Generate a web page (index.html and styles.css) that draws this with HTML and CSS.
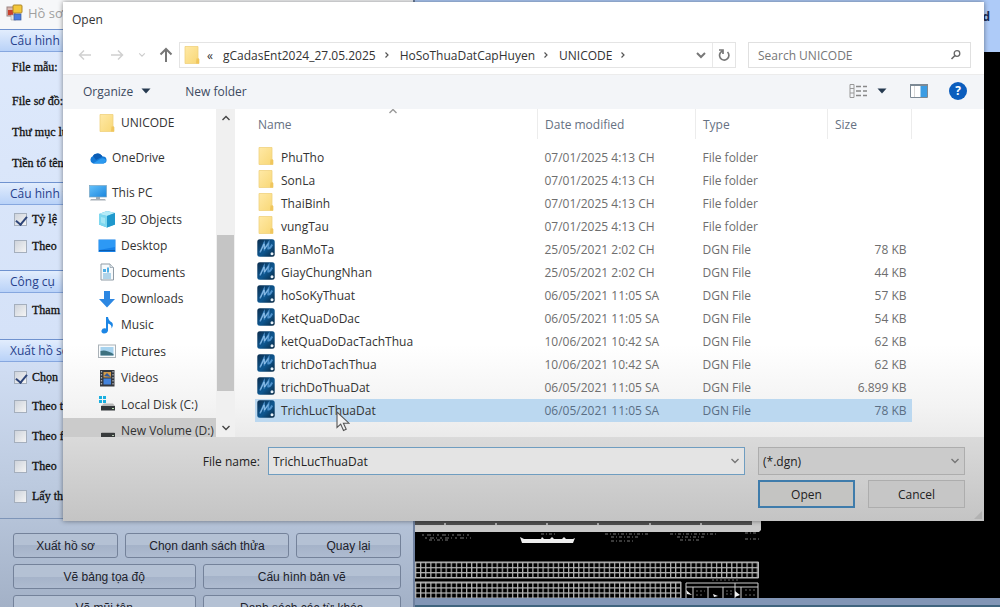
FILE: index.html
```html
<!DOCTYPE html>
<html lang="vi">
<head>
<meta charset="utf-8">
<title>Open</title>
<link rel="stylesheet" href="styles.css">
</head>
<body>
<svg class="defs" width="0" height="0" aria-hidden="true">
  <defs>
    <linearGradient id="gFolder" x1="0" y1="0" x2="1" y2="1"><stop offset="0" stop-color="#ffe9a6"/><stop offset="1" stop-color="#f8d775"/></linearGradient>
    <linearGradient id="gScreen" x1="0" y1="0" x2="1" y2="1"><stop offset="0" stop-color="#63c1fb"/><stop offset="1" stop-color="#1b86dd"/></linearGradient>
    <linearGradient id="gDgn" x1="0" y1="0" x2="1" y2="1"><stop offset="0" stop-color="#0b2c4c"/><stop offset=".55" stop-color="#0e5790"/><stop offset="1" stop-color="#08263f"/></linearGradient>
    <symbol id="folder" viewBox="0 0 18 18"><path d="M2 .5h13v12.500h1v4.500H2z" fill="url(#gFolder)" stroke="#f0d27e" stroke-width=".8"/><path d="M13.500 12.500h2.500v5h-3z" fill="#f0c65d"/></symbol>
    <symbol id="dgn" viewBox="0 0 18 18"><rect x=".3" y=".3" width="17.400" height="17.400" rx="2.500" fill="url(#gDgn)"/><path d="M3 13.500 7 4.500 7.500 10 11.500 4 11.200 9.500q2 .3 4-4" fill="none" stroke="#4f92cc" stroke-width="1.800"/><path d="M3.500 12.500 7 5 7.500 10 11.500 4.500" fill="none" stroke="#a5cdee" stroke-width=".7"/><circle cx="15" cy="14.800" r="1.500" fill="#e8f2fa"/></symbol>
    <symbol id="cloud" viewBox="0 0 18 18"><path d="M4 14.500a4 4 0 0 1 0-7.500 5.500 5.500 0 0 1 9.500.5 3.500 3.500 0 0 1 1 7z" fill="#1479d6"/><path d="M4 7a5.500 5.500 0 0 1 9.500.5L7 11z" fill="#0b5cb4"/><path d="M4 14.500 12 9.500q3.500-1 5 1.500a3.500 3.500 0 0 1-2.500 3.500z" fill="#2b9af0"/></symbol>
    <symbol id="pc" viewBox="0 0 18 18"><rect x=".5" y="1.500" width="17" height="11.500" fill="url(#gScreen)" stroke="#7ba5c2" stroke-width=".7"/><path d="M7 13h4v2H7z" fill="#9dacb7"/><path d="M2 15h14l1 1.500H1z" fill="#a7b0b7"/></symbol>
    <symbol id="cube" viewBox="0 0 18 18"><path d="M1 4 9 1l8 2v11.500L9 17.500l-8-3z" fill="#3aaedc"/><path d="m1 4 8 2v11.500l-8-3z" fill="#7ed8ef"/><path d="m1 4 8-3 8 2-8 3z" fill="#b5ecf8"/><path d="m3 7 4 1v6l-4-1.500z" fill="#a3e6f5"/><path d="m9 6 8-3v11.500l-8 3z" fill="#1f98cc"/></symbol>
    <symbol id="desk" viewBox="0 0 18 18"><rect x=".5" y="2.500" width="17" height="12.500" fill="#1681e8"/><path d="M1 3h16v7L1 13z" fill="#2d99f5"/><path d="M1 13.500h16" stroke="#0d5cad" stroke-width="1"/></symbol>
    <symbol id="doc" viewBox="0 0 18 18"><path d="M3 1h9l3.500 3.500V17H3z" fill="#f7fafc" stroke="#8f9ba5"/><path d="M12 1v3.500h3.500" fill="#dbe3e9" stroke="#8f9ba5" stroke-width=".7"/><path d="M5 6h3v3H5zM9 4.500h2v5H9z" fill="#4eaee5"/><path d="M5 11h8M5 13h8M5 15h8" stroke="#69add6"/></symbol>
    <symbol id="down" viewBox="0 0 18 18"><path d="M6 1h6v8h5l-8 8.500L1 9h5z" fill="#2c87e2"/></symbol>
    <symbol id="note" viewBox="0 0 18 18"><path d="M8 1h2q.5 3.500 4 5.500 2 2.500-.5 6 .5-4-3.500-5v7q-.5 3-4 3-3-.3-2.500-3 1-3 4.500-2z" fill="#1c86e5"/></symbol>
    <symbol id="pic" viewBox="0 0 18 18"><rect x=".5" y="3" width="17" height="12.500" fill="#fafcfd" stroke="#aab2b8"/><path d="M2.500 5h13v8.500h-13z" fill="#a7d3ef"/><path d="M2.500 9q5-2 13 3v1.500h-13z" fill="#3d7180"/></symbol>
    <symbol id="film" viewBox="0 0 18 18"><rect x="2" y="1" width="14.500" height="16.500" fill="#34383f"/><path d="M3.500 2v15M15 2v15" stroke="#a9adb2" stroke-width="1.300" stroke-dasharray="1.500 1.500"/><path d="M5.500 3h7.500v5.500H5.500z" fill="#d39a49"/><path d="M5.500 9.500h7.500v6H5.500z" fill="#4383dc"/><path d="m6 7 3-3 4 4z" fill="#315b9f"/></symbol>
    <symbol id="windisk" viewBox="0 0 18 18"><path d="M1 1h3v3H1zM5 1h3v3H5zM1 5h3v3H1zM5 5h3v3H5z" fill="#19afe0"/><path d="m4 10 2-1.500h9L17 11H3z" fill="#b8b8b8"/><path d="M3 11h14v4.500H3z" fill="#33373a"/><path d="M14 13.500h2" stroke="#b7dfae"/></symbol>
    <symbol id="disk" viewBox="0 0 18 18"><path d="m3 11 1-1h12l1 1z" fill="#aaa"/><path d="M3 11h14v4H3z" fill="#383b3c"/><path d="M14 13.500h2" stroke="#b5c8b0"/></symbol>
    <symbol id="chev" viewBox="0 0 10 10"><path d="m1.500 3 3.500 3.500L8.500 3" fill="none" stroke="currentColor" stroke-width="1.400"/></symbol>
    <symbol id="chevr" viewBox="0 0 10 10"><path d="m3.500 2.500 2.500 2.500-2.500 2.500" fill="none" stroke="currentColor" stroke-width="1.200"/></symbol>
    <symbol id="tri" viewBox="0 0 10 10"><path d="M.5 2.500h9L5 7.500z" fill="currentColor"/></symbol>
  </defs>
</svg>

<main class="desktop">
  <section class="app">
    <header class="app-title">
      <svg width="18" height="18" viewBox="0 0 18 18"><rect x="1" y="3" width="8" height="9" fill="#d9b6b0" stroke="#9b8584"/><path d="M2 6h5v5H2z" fill="#c9412e"/><rect x="7" y="1" width="9" height="8" rx="1" fill="#f3c73b" stroke="#ae882b"/><path d="M5 11h5v5H5z" fill="#e6e5e3" stroke="#a5a5a5" stroke-width=".6"/><rect x="8" y="10" width="7" height="6" fill="#497de0" stroke="#3a599c" stroke-width=".7"/></svg>
      <span>Hồ sơ</span>
    </header>
    <h2 class="band">Cấu hình mẫu</h2>
    <div class="group files">
      <div class="field first">File mẫu:</div>
      <div class="field">File sơ đồ:</div>
      <div class="field">Thư mục lưu</div>
      <div class="field">Tiền tố tên</div>
    </div>
    <h2 class="band">Cấu hình tỷ lệ</h2>
    <div class="group scale">
      <label class="check"><input type="checkbox" checked>Tỷ lệ</label>
      <label class="check"><input type="checkbox">Theo</label>
    </div>
    <h2 class="band">Công cụ</h2>
    <div class="group tools">
      <label class="check"><input type="checkbox">Tham</label>
    </div>
    <h2 class="band">Xuất hồ sơ</h2>
    <div class="group export">
      <label class="check"><input type="checkbox" checked>Chọn</label>
      <label class="check tall"><input type="checkbox">Theo thửa</label>
      <label class="check tall"><input type="checkbox">Theo file</label>
      <label class="check tall"><input type="checkbox">Theo</label>
      <label class="check tall"><input type="checkbox">Lấy thửa</label>
    </div>
    <footer class="actions">
      <div class="action-row three"><button>Xuất hồ sơ</button><button>Chọn danh sách thửa</button><button>Quay lại</button></div>
      <div class="action-row two"><button>Vẽ bảng tọa độ</button><button>Cấu hình bản vẽ</button></div>
      <div class="action-row two"><button>Vẽ mũi tên</button><button>Danh sách các từ khóa</button></div>
    </footer>
  </section>

  <section class="cad">
    <div class="cad-head">d</div>
    <div class="cad-view">
      <svg width="346" height="77" viewBox="0 0 346 77">
        <defs>
          <pattern id="cells" width="5.100" height="5.100" patternUnits="userSpaceOnUse"><path d="M0 .6h5.100M.6 0v5.100" stroke="#b4b4b4" stroke-width="1.200"/></pattern>
        </defs>
        <path d="M0 0h346v9l-2 2H0z" fill="#c9c9c9"/><path d="M0 0h337v4H0z" fill="#505050"/>
        <path d="M30 2v2M81 2v2M132 2v2M183 2v2M235 2v2M286 2v2M338 1v3" stroke="#ccc" stroke-width="1.500"/>
        <g stroke="#777" fill="none" stroke-width="1"><path d="M7 14h50M10 17h46" stroke-dasharray="2 3 4 2 1 3"/><path d="M14 19h20M126 13h16M190 13h45M196 16h28M255 13h48M262 16h28M265 19h20M330 12h12M330 18h14M196 20h22" stroke-dasharray="3 2 1 2"/></g>
        <path d="m105 16 4 2h17l1-2 2 2h6l2-2 2 2h8l2-2 2 2h7l2-1-2 5h-51z" fill="#eee"/>
        <path d="M0 41h343v16H0z" fill="url(#cells)"/><path d="M0 41h343.500v16H0" fill="none" stroke="#b4b4b4"/>
        <path d="M0 61h266v16H0z" fill="url(#cells)"/><path d="M0 61h266v16" fill="none" stroke="#b4b4b4"/>
        <path d="M271 77V62h72v15M271 66h72M278 66v11M293 66v11M308 66v11M320 62v15M326 66v11" fill="none" stroke="#ccc"/>
        <path d="m271 69 6 5-5-1zM298 73l5 2-4 1zM320 70l5 4-5 2z" fill="#eee"/>
        <path d="M297 59h27M281 70h9M281 74h8M311 70h7M311 73h6M330 69h10M330 74h10" stroke="#666" stroke-dasharray="2 2"/>
      </svg>
    </div>
    <div class="cad-status"></div>
  </section>
</main>

<div class="dialog" role="dialog" aria-labelledby="dlg-title">
  <header class="dlg-title" id="dlg-title">Open</header>
  <div class="address">
    <button class="nav back" aria-label="Back"><svg width="14" height="14" viewBox="0 0 14 14"><path d="M13 7H1.500M6 2.500 1.500 7 6 11.500" fill="none" stroke="#d0d0d0" stroke-width="1.500"/></svg></button>
    <button class="nav forward" aria-label="Forward"><svg width="14" height="14" viewBox="0 0 14 14"><path d="M1 7h11.500M8 2.500 12.500 7 8 11.500" fill="none" stroke="#d0d0d0" stroke-width="1.500"/></svg></button>
    <button class="nav recent" aria-label="Recent locations"><svg width="8" height="8"><use href="#chev"/></svg></button>
    <button class="nav up" aria-label="Up"><svg width="14" height="16" viewBox="0 0 14 16"><path d="M7 15V2M1.500 7.500 7 2l5.500 5.500" fill="none" stroke="#777" stroke-width="2"/></svg></button>
    <div class="path">
      <svg width="18" height="18"><use href="#folder"/></svg>
      <span class="laquo">«</span>
      <span>gCadasEnt2024_27.05.2025</span>
      <svg class="sep" width="10" height="10"><use href="#chevr"/></svg>
      <span>HoSoThuaDatCapHuyen</span>
      <svg class="sep" width="10" height="10"><use href="#chevr"/></svg>
      <span>UNICODE</span>
      <svg class="sep" width="10" height="10"><use href="#chevr"/></svg>
      <button class="plain drop" aria-label="Previous locations"><svg width="12" height="12" viewBox="0 0 12 12"><path d="m2 4 4 4 4-4" fill="none" stroke="#777" stroke-width="2"/></svg></button>
      <button class="plain refresh" aria-label="Refresh"><svg width="14" height="14" viewBox="0 0 14 14"><path d="M10.500 4A4.700 4.700 0 1 1 5 3.200M2 2h4v4" fill="none" stroke="#777" stroke-width="1.700"/></svg></button>
    </div>
    <div class="search">
      <input type="text" placeholder="Search UNICODE" aria-label="Search UNICODE">
      <svg width="12" height="12" viewBox="0 0 12 12"><circle cx="7" cy="4.500" r="2.800" fill="none" stroke="#666" stroke-width="1.300"/><path d="M5 6.500 1.500 10" stroke="#666" stroke-width="1.600"/></svg>
    </div>
  </div>
  <div class="toolbar">
    <button class="plain">Organize <svg width="10" height="10"><use href="#tri"/></svg></button>
    <button class="plain newfolder">New folder</button>
    <button class="plain views" aria-label="Change your view"><svg width="19" height="14" viewBox="0 0 19 14"><path d="M1 .5h4v13H1zM1 4.500h4M1 9h4" fill="none" stroke="#999"/><path d="M7 2.500h5M7 7h5M7 11.500h5M14 2.500h4M14 7h4M14 11.500h4" stroke="#888" stroke-width="1.300"/></svg></button>
    <button class="plain viewdrop" aria-label="More options"><svg width="10" height="10"><use href="#tri"/></svg></button>
    <button class="plain preview" aria-label="Preview pane"><svg width="18" height="14" viewBox="0 0 18 14"><path d="M.5.500h17v13H.5z" fill="#fff" stroke="#7c8994"/><path d="M0 1h18" stroke="#7c8994" stroke-width="2"/><path d="M4.500 2v11" stroke="#d6d6d6"/><path d="M10.500 2H17v11h-6.500z" fill="#3b9ce3"/></svg></button>
    <button class="plain" aria-label="Help"><span class="help">?</span></button>
  </div>
  <div class="body">
    <nav class="tree">
      <a class="leaf unicode" href="#"><svg width="18" height="18"><use href="#folder"/></svg>UNICODE</a>
      <a class="root" href="#"><svg width="18" height="18"><use href="#cloud"/></svg>OneDrive</a>
      <a class="root" href="#"><svg width="18" height="18"><use href="#pc"/></svg>This PC</a>
      <div class="leaves">
        <a class="leaf" href="#"><svg width="18" height="18"><use href="#cube"/></svg>3D Objects</a>
        <a class="leaf" href="#"><svg width="18" height="18"><use href="#desk"/></svg>Desktop</a>
        <a class="leaf" href="#"><svg width="18" height="18"><use href="#doc"/></svg>Documents</a>
        <a class="leaf" href="#"><svg width="18" height="18"><use href="#down"/></svg>Downloads</a>
        <a class="leaf" href="#"><svg width="18" height="18"><use href="#note"/></svg>Music</a>
        <a class="leaf" href="#"><svg width="18" height="18"><use href="#pic"/></svg>Pictures</a>
        <a class="leaf" href="#"><svg width="18" height="18"><use href="#film"/></svg>Videos</a>
        <a class="leaf" href="#"><svg width="18" height="18"><use href="#windisk"/></svg>Local Disk (C:)</a>
        <a class="leaf selected" href="#"><svg width="18" height="18"><use href="#disk"/></svg>New Volume (D:)</a>
      </div>
    </nav>
    <div class="scroll">
      <svg class="flip" width="10" height="10"><use href="#chev"/></svg>
      <div class="thumb"></div>
      <svg width="10" height="10"><use href="#chev"/></svg>
    </div>
    <div class="list">
      <table>
        <colgroup><col><col class="c-date"><col class="c-type"><col class="c-size"></colgroup>
        <thead><tr><th><span class="sort"><svg class="flip" width="10" height="10"><use href="#chev"/></svg></span>Name</th><th>Date modified</th><th>Type</th><th>Size</th></tr></thead>
        <tbody>
          <tr><td><span class="name"><svg width="18" height="18"><use href="#folder"/></svg>PhuTho</span></td><td>07/01/2025 4:13 CH</td><td>File folder</td><td></td></tr>
          <tr><td><span class="name"><svg width="18" height="18"><use href="#folder"/></svg>SonLa</span></td><td>07/01/2025 4:13 CH</td><td>File folder</td><td></td></tr>
          <tr><td><span class="name"><svg width="18" height="18"><use href="#folder"/></svg>ThaiBinh</span></td><td>07/01/2025 4:13 CH</td><td>File folder</td><td></td></tr>
          <tr><td><span class="name"><svg width="18" height="18"><use href="#folder"/></svg>vungTau</span></td><td>07/01/2025 4:13 CH</td><td>File folder</td><td></td></tr>
          <tr><td><span class="name"><svg width="18" height="18"><use href="#dgn"/></svg>BanMoTa</span></td><td>25/05/2021 2:02 CH</td><td>DGN File</td><td>78 KB</td></tr>
          <tr><td><span class="name"><svg width="18" height="18"><use href="#dgn"/></svg>GiayChungNhan</span></td><td>25/05/2021 2:02 CH</td><td>DGN File</td><td>44 KB</td></tr>
          <tr><td><span class="name"><svg width="18" height="18"><use href="#dgn"/></svg>hoSoKyThuat</span></td><td>06/05/2021 11:05 SA</td><td>DGN File</td><td>57 KB</td></tr>
          <tr><td><span class="name"><svg width="18" height="18"><use href="#dgn"/></svg>KetQuaDoDac</span></td><td>06/05/2021 11:05 SA</td><td>DGN File</td><td>54 KB</td></tr>
          <tr><td><span class="name"><svg width="18" height="18"><use href="#dgn"/></svg>ketQuaDoDacTachThua</span></td><td>10/06/2021 10:42 SA</td><td>DGN File</td><td>62 KB</td></tr>
          <tr><td><span class="name"><svg width="18" height="18"><use href="#dgn"/></svg>trichDoTachThua</span></td><td>10/06/2021 10:42 SA</td><td>DGN File</td><td>62 KB</td></tr>
          <tr><td><span class="name"><svg width="18" height="18"><use href="#dgn"/></svg>trichDoThuaDat</span></td><td>06/05/2021 11:05 SA</td><td>DGN File</td><td>6.899 KB</td></tr>
          <tr class="picked"><td><span class="name"><svg width="18" height="18"><use href="#dgn"/></svg>TrichLucThuaDat<svg class="cursor" width="14" height="21" viewBox="0 0 14 21"><path d="M1 1v15.500l3.700-3.400 2.800 6.400 2.700-1.200-2.800-6.100H13z" fill="#f2f2f2" stroke="#555" stroke-width="1.100"/></svg></span></td><td>06/05/2021 11:05 SA</td><td>DGN File</td><td>78 KB</td></tr>
        </tbody>
      </table>
    </div>
  </div>
  <footer class="dlg-foot">
    <label class="fn-label" for="fn">File name:</label>
    <div class="combo"><input id="fn" type="text" value="TrichLucThuaDat"><svg width="10" height="10"><use href="#chev"/></svg></div>
    <div class="filter"><select aria-label="File type"><option>(*.dgn)</option></select><svg width="10" height="10"><use href="#chev"/></svg></div>
    <div class="buttons"><button class="btn primary">Open</button><button class="btn">Cancel</button></div>
    <svg class="grip" width="8" height="8" viewBox="0 0 8 8"><path d="M8 0v8H0z" fill="#b2b2b2"/></svg>
  </footer>
</div>
</body>
</html>
```
FILE: styles.css
```css
* { box-sizing: border-box; }
body { margin: 0; height: 100vh; overflow: hidden; position: relative; background: #000; font-family: "Open Sans", "Noto Sans", sans-serif; font-size: 12px; color: #333; }
button, input, select { font: inherit; color: inherit; margin: 0; }
a { color: inherit; text-decoration: none; }
svg { flex: none; display: block; }
.defs { position: absolute; }

/* application window behind the dialog */
.desktop { display: flex; height: 100vh; overflow: hidden; }
.app { flex: 0 0 415px; height: 100%; overflow: hidden; background: linear-gradient(#dfeafc, #d5e2f8 55%, #bccadf 80%, #a3b1c7); border-right: 2px solid #6f819f; }
.app-title { display: flex; align-items: center; gap: 4px; height: 29px; padding: 0 6px 4px; background: #f6f7f9; color: #a0a0a0; font-size: 13px; }
.band { height: 23px; margin: 0; padding-left: 10px; border-top: 1px solid #6f92cf; border-bottom: 1px solid #86a7df; background: linear-gradient(#e2edfd, #b9d2f8); color: #27418c; font: 12px/22px "Open Sans", sans-serif; white-space: nowrap; }
.group { font: 12px "Liberation Serif", serif; color: #111; -webkit-text-stroke: 0.3px #111; }
.field { display: flex; align-items: center; height: 31px; padding-left: 12px; }
.field.first { height: 30px; margin-bottom: 4px; }
.files { padding-bottom: 3px; }
.scale { padding: 1px 0 10px; }
.tools { padding: 4px 0 15px; }
.export { padding: 2px 0 7px; }
.check { display: flex; align-items: center; gap: 5px; height: 27px; padding-left: 14px; }
.check.tall { height: 30px; }
.check input { appearance: none; width: 13px; height: 13px; border: 1px solid #a5afbd; background: linear-gradient(135deg, #cfd4dc, #f4f4f4); position: relative; }
.check input:checked::after { content: ""; position: absolute; left: 3px; top: 0; width: 5px; height: 9px; border: solid #2d4478; border-width: 0 2px 2px 0; transform: rotate(40deg); }
.actions { display: grid; gap: 6px; padding: 14px 12px 0 13px; border-top: 1px solid #7e95b8; }
.action-row { display: grid; gap: 7px; }
.three { grid-template-columns: 105fr 164fr 105fr; }
.two { grid-template-columns: 183fr 199fr; }
.action-row button { height: 25px; padding: 0; border: 1px solid #74829a; border-radius: 3px; background: linear-gradient(#b4c1d4 50%, #a5b3c9 50%, #aebbd0); color: #1d222b; font: 12px "Liberation Sans", sans-serif; }

.cad { flex: 1; display: flex; flex-direction: column; background: #000; }
.cad-head { height: 52px; padding: 8px 10px 0 0; text-align: right; background: #aecbf8; color: #1b2c55; font-weight: bold; font-size: 12px; }
.cad-view { flex: 1; display: flex; align-items: flex-end; }
.cad-status { height: 9px; background: #8296b6; border-bottom: 2px solid #40657f; }

/* file dialog */
.dialog { position: absolute; left: 63px; top: 2px; right: 16px; background: linear-gradient(#fff 66%, #f3f3f3 78%, #e4e4e4 88%); box-shadow: 0 0 5px rgba(0,0,0,.45); }
.dlg-title { height: 34px; padding: 9px 9px 0; line-height: 18px; }
.address { display: flex; align-items: center; height: 38px; padding-right: 13px; }
.nav, .plain { border: 0; padding: 0; background: none; display: flex; align-items: center; }
.back { margin-left: 15px; }
.forward { margin-left: 18px; }
.recent { margin-left: 14px; color: #ccc; }
.up { margin-left: 13px; }
.path { flex: 1; display: flex; align-items: center; height: 26px; margin-left: 6px; padding-left: 3px; border: 1px solid #e4e4e4; }
.laquo { margin: 0 10px 0 6px; }
.sep { margin: 0 8px 0 6px; color: #555; }
.drop { margin-left: auto; height: 24px; padding-right: 5px; border-right: 1px solid #e8e8e8; }
.refresh { padding: 0 4px; }
.search { display: flex; align-items: center; width: 223px; height: 26px; margin-left: 12px; padding: 0 8px 0 9px; border: 1px solid #e0e0e0; }
.search input { flex: 1; min-width: 0; border: 0; padding: 0; background: none; outline: 0; }
.search input::placeholder { color: #777; opacity: 1; }
.toolbar { display: flex; align-items: center; height: 35px; padding: 0 17px 2px 20px; background: #f3f5f8; border-top: 1px solid #ececec; color: #3c4a60; }
.toolbar .plain svg { color: #263a50; }
.toolbar .plain:first-child { gap: 8px; }
.newfolder { margin-left: 34px; }
.views { margin-left: auto; }
.viewdrop { margin: 0 23px 0 9px; }
.preview { margin-right: 21px; }
.help { display: block; width: 18px; height: 18px; border-radius: 50%; background: #0b5dbd; color: #fff; font-weight: bold; line-height: 18px; text-align: center; }
.body { display: flex; height: 328px; overflow: hidden; }
.tree { flex: 0 0 153px; overflow: hidden; white-space: nowrap; }
.tree a { display: flex; align-items: center; gap: 5px; }
.tree .root { height: 35px; padding-left: 26px; }
.tree .leaf { padding-left: 35px; }
.tree .unicode { height: 31px; padding-bottom: 4px; }
.leaves { display: grid; grid-auto-rows: 1fr; height: 238px; margin-top: -4px; }
.tree .selected { background: #cbcbcb; }
.scroll { flex: 0 0 19px; display: flex; flex-direction: column; align-items: center; padding: 4px 0 4px; background: #f0f0f0; color: #444; }
.thumb { width: 17px; height: 156px; margin: 112px 0 auto; background: #c5c5c5; }
.flip { transform: rotate(180deg); }
.list { flex: 1; padding: 0 72px 0 20px; }
table { width: 100%; table-layout: fixed; border-collapse: collapse; }
.c-date { width: 158px; }
.c-type { width: 132px; }
.c-size { width: 84px; }
th { position: relative; height: 30px; padding: 0 0 0 7px; text-align: left; font-weight: normal; color: #667182; border-right: 1px solid #ececec; }
th:first-child { padding-left: 3px; }
thead::after { content: ""; display: block; height: 7px; }
.sort { position: absolute; left: 133px; top: -3px; color: #999; }
td { height: 23px; padding: 0 0 0 7px; line-height: 18px; white-space: nowrap; color: #6e6e6e; }
td:first-child { padding-left: 2px; color: #333; }
td:last-child { padding-right: 5px; text-align: right; }
.name { position: relative; display: flex; align-items: center; gap: 6px; height: 23px; }
.name > svg:first-child { margin-bottom: 3px; }
.picked { background: #bbd8f0; }
.picked td:not(:first-child) { color: #5a6e84; }
.cursor { position: absolute; left: 79px; top: 12px; z-index: 1; }
.dlg-foot { position: relative; display: grid; grid-template-columns: 197px 1fr 207px; column-gap: 8px; row-gap: 5px; padding: 10px 19px 13px 0; background: linear-gradient(#dadada, #c4c4c4); color: #222; }
.fn-label { align-self: center; text-align: right; }
.combo, .filter { position: relative; height: 28px; color: #222; }
.combo { margin-right: 5px; }
.combo input, .filter select { appearance: none; width: 100%; height: 28px; padding: 0 4px; outline: 0; border-radius: 0; }
.combo input { border: 1px solid #6f9dc0; background: #e4e4e4; }
.filter select { border: 1px solid #adadad; background: #cbcbcb; }
.combo svg, .filter svg { position: absolute; right: 5px; top: 9px; color: #777; pointer-events: none; }
.buttons { grid-column: 3; display: grid; grid-template-columns: 1fr 1fr; gap: 13px; }
.btn { height: 28px; padding: 0; border: 1px solid #adadad; background: #c6c6c6; }
.primary { border: 2px solid #3f7cab; background: #c4c4c2; }
.grip { position: absolute; right: 2px; bottom: 2px; }
```
